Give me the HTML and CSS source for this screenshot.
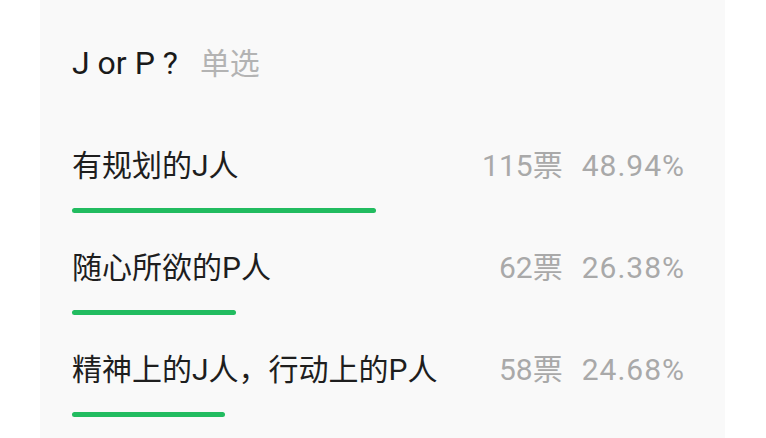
FILE: index.html
```html
<!DOCTYPE html>
<html lang="zh">
<head>
    <meta charset="UTF-8">
    <meta name="viewport" content="width=device-width, initial-scale=1.0">
    <title>J or P ?</title>
    <link rel="stylesheet" href="styles.css">
</head>
<body>
    <div class="card">
        <h1 class="title">J or P ?<span class="type">单选</span></h1>

        <div class="options">
            <div class="option">
                <div class="option-head">
                    <span class="label">有规划的J人</span>
                    <span class="stats"><span>115票</span><span class="pct">48.94%</span></span>
                </div>
                <div class="track"><div class="fill" style="width: 48.94%"></div></div>
            </div>

            <div class="option">
                <div class="option-head">
                    <span class="label">随心所欲的P人</span>
                    <span class="stats"><span>62票</span><span class="pct">26.38%</span></span>
                </div>
                <div class="track"><div class="fill" style="width: 26.38%"></div></div>
            </div>

            <div class="option">
                <div class="option-head">
                    <span class="label">精神上的J人，行动上的P人</span>
                    <span class="stats"><span>58票</span><span class="pct">24.68%</span></span>
                </div>
                <div class="track"><div class="fill" style="width: 24.68%"></div></div>
            </div>
        </div>
    </div>
</body>
</html>
```

FILE: styles.css
```css
html, body {
    height: 100%;
}

body {
    font-family: Roboto, "Noto Sans CJK SC", sans-serif;
    background-color: #ffffff;
    margin: 0;
    padding: 0 41px 0 40px;
    overflow: hidden;
}

.card {
    min-height: 100%;
    background-color: #f9f9f9;
    padding: 43px 32px 0 32px;
    box-sizing: border-box;
}

.title {
    margin: 0;
    font-size: 32px;
    font-weight: 400;
    line-height: 40px;
    color: #1a1a1a;
}

.type {
    margin-left: 22px;
    font-size: 30px;
    color: #b3b3b3;
}

.options {
    display: flex;
    flex-direction: column;
    gap: 35px;
    margin-top: 62px;
}

.option-head {
    display: flex;
    justify-content: space-between;
    align-items: center;
    font-size: 30px;
    line-height: 40px;
}

.label {
    color: #1e1e1e;
}

.stats {
    display: flex;
    gap: 19px;
    margin-right: 9px;
    color: #a9a9a9;
}

.pct {
    letter-spacing: 1px;
    margin-right: -1px;
}

.track {
    margin-top: 22px;
    height: 5px;
}

.fill {
    height: 100%;
    background-color: #22bc60;
    border-radius: 3px;
}
```
